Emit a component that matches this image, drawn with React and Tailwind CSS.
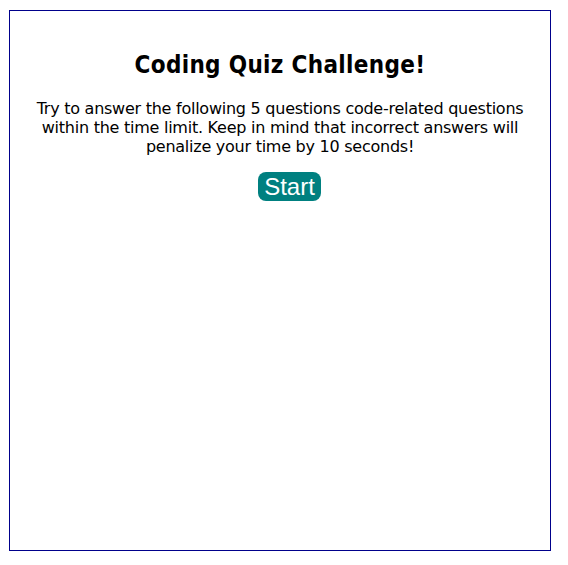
export default function App() {
  return (
    <div className="w-[568px] h-[565px] bg-white pt-[10px] pl-[9px]">
      <div className="w-[542px] h-[541px] border border-[#00008b] flex flex-col items-center px-[20px] pt-[40px] font-['DejaVu_Sans',sans-serif] text-black">
        <h1 className="text-[24px] leading-[28px] font-bold text-center font-['DejaVu_Sans_Condensed','DejaVu_Sans',sans-serif] [font-stretch:semi-condensed] tracking-[0.33px]">Coding Quiz Challenge!</h1>
        <p className="mt-[20px] text-[16px] leading-[19px] text-center tracking-[-0.25px]">
          Try to answer the following 5 questions code-related questions within the time limit. Keep in mind that incorrect answers will penalize your time by 10 seconds!
        </p>
        <button className="mt-[16px] ml-[19px] w-[63px] h-[29px] rounded-[8px] bg-[#008080] text-white text-[24px] leading-[29px] font-['Liberation_Sans',sans-serif] text-center">
          Start
        </button>
      </div>
    </div>
  );
}
